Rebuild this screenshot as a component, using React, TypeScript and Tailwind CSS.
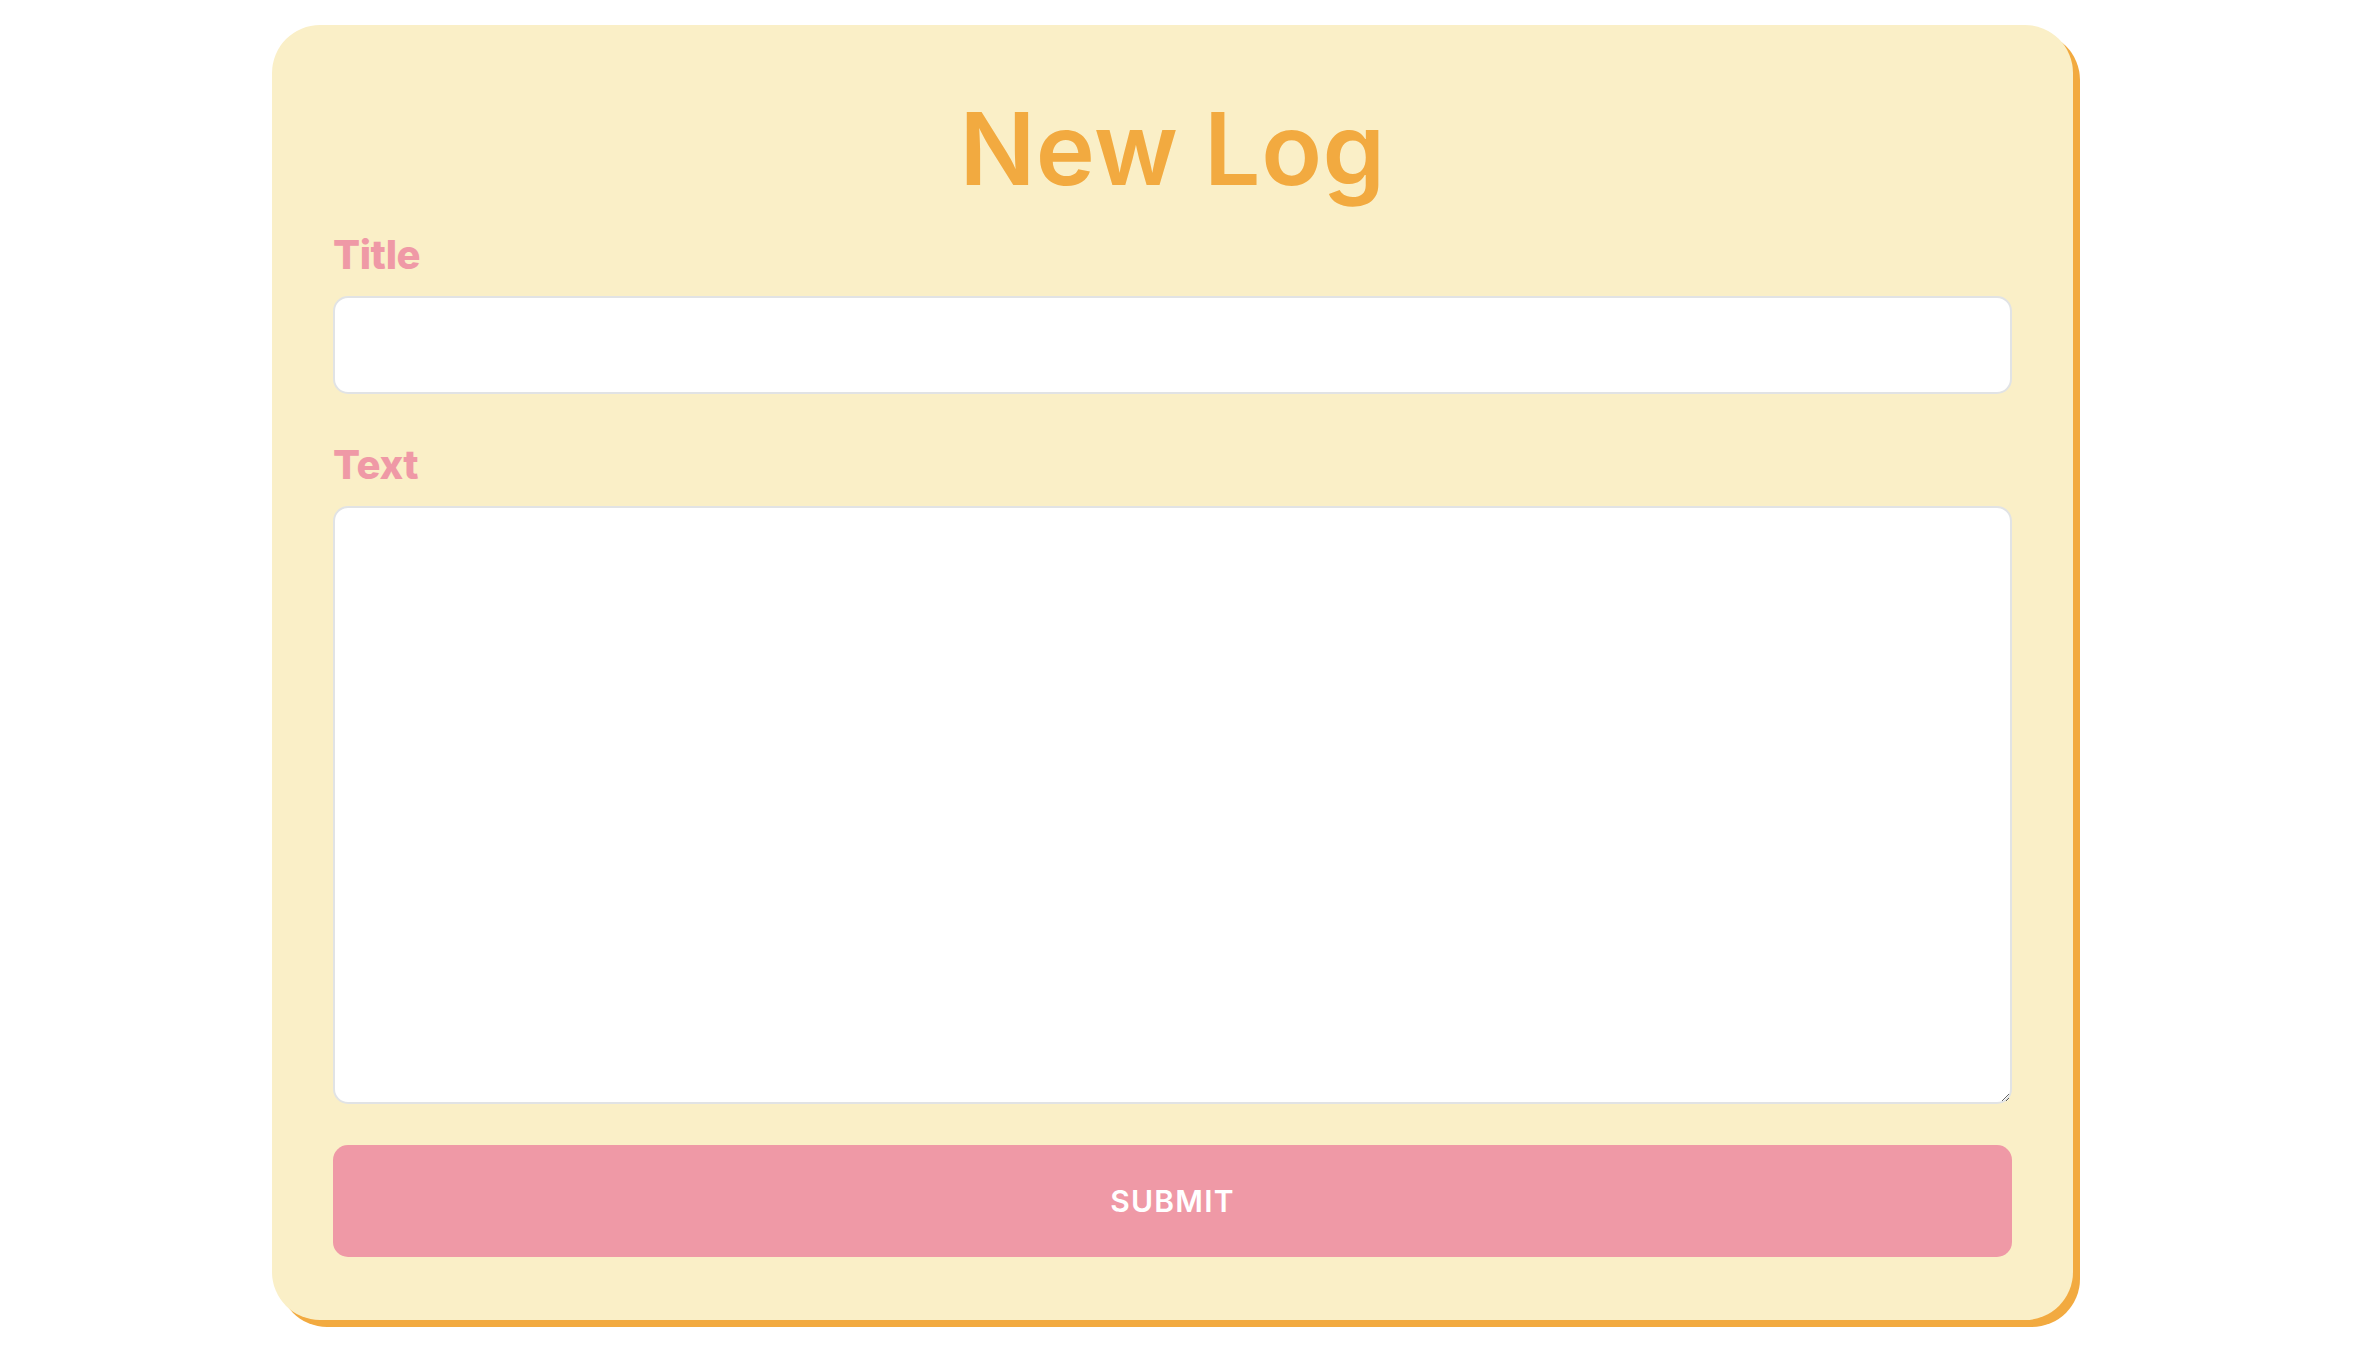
export default function App() {
  return (
    <div className="min-h-screen w-[2345px] bg-white pt-[25px] pb-[30px] flex justify-center font-['Inter',sans-serif]">
      <form
        className="w-[1801px] bg-[#faefc7] rounded-[48px] shadow-[7px_7px_0_#f2aa40] px-[61px] pb-[60px] pt-[74px] flex flex-col"
        onSubmit={(e) => e.preventDefault()}
      >
        <h1 className="text-center text-[100px] leading-none font-semibold text-[#f2aa40] tracking-[0.5px]">
          New Log
        </h1>

        <label className="mt-[36px] text-[40px] leading-none font-extrabold text-[#ef99a6] tracking-[-0.4px]">
          Title
        </label>
        <input
          type="text"
          className="mt-[21px] h-[98px] w-full bg-white border-2 border-[#e1e3e5] rounded-[15px] px-5 text-[28px] outline-none"
        />

        <label className="mt-[51px] text-[40px] leading-none font-extrabold text-[#ef99a6] tracking-[-0.4px]">
          Text
        </label>
        <textarea className="mt-[21px] h-[598px] w-full bg-white border-2 border-[#e1e3e5] rounded-[15px] p-5 text-[28px] outline-none" />

        <button
          type="submit"
          className="mt-[41px] h-[112px] w-full bg-[#ef99a6] rounded-[15px] text-white text-[30px] font-semibold tracking-[1.2px]"
        >
          SUBMIT
        </button>
      </form>
    </div>
  );
}
